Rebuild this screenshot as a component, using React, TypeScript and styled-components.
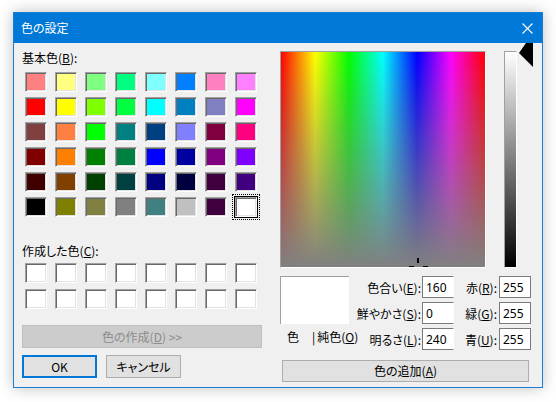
import React from "react";
import styled, { createGlobalStyle, css } from "styled-components";

const GlobalStyle = createGlobalStyle`
  html, body {
    margin: 0;
    padding: 0;
    background: #ffffff;
  }
  body {
    font-family: "Noto Sans CJK JP", "Noto Sans", sans-serif;
    font-size: 12px;
    font-feature-settings: "palt";
    color: #000;
  }
`;

const basicColors = [
  ["#ff8080", "#ffff80", "#80ff80", "#00ff80", "#80ffff", "#0080ff", "#ff80c0", "#ff80ff"],
  ["#ff0000", "#ffff00", "#80ff00", "#00ff40", "#00ffff", "#0080c0", "#8080c0", "#ff00ff"],
  ["#804040", "#ff8040", "#00ff00", "#008080", "#004080", "#8080ff", "#800040", "#ff0080"],
  ["#800000", "#ff8000", "#008000", "#008040", "#0000ff", "#0000a0", "#800080", "#8000ff"],
  ["#400000", "#804000", "#004000", "#004040", "#000080", "#000040", "#400040", "#400080"],
  ["#000000", "#808000", "#808040", "#808080", "#408080", "#c0c0c0", "#400040", "#ffffff"],
];

function App() {
  return (
    <>
      <GlobalStyle />
      <Page>
        <Window>
          <TitleBar>
            <span>色の設定</span>
            <CloseBox>
              <svg width="11" height="11" viewBox="0 0 11 11">
                <path d="M0.5 0.5 L10.5 10.5 M10.5 0.5 L0.5 10.5" stroke="#fff" strokeWidth="1.1" />
              </svg>
            </CloseBox>
          </TitleBar>
          <Body>
            <LeftColumn>
              <Label>
                基本色(<u>B</u>):
              </Label>
              <SwatchGrid>
                {basicColors.flat().map((c, i) => (
                  <Swatch key={i} $color={c} $selected={i === 47} />
                ))}
              </SwatchGrid>
              <Label $top={26}>
                作成した色(<u>C</u>):
              </Label>
              <SwatchGrid $rowGap={6} $top={4}>
                {Array.from({ length: 16 }).map((_, i) => (
                  <Swatch key={i} $color="#ffffff" />
                ))}
              </SwatchGrid>
              <WideButton disabled>
                色の作成(<u>D</u>) &gt;&gt;
              </WideButton>
              <ButtonRow>
                <PushButton $default>OK</PushButton>
                <PushButton>キャンセル</PushButton>
              </ButtonRow>
            </LeftColumn>
            <RightColumn>
              <PickerRow>
                <Spectrum>
                  <Crosshair width="23" height="14" viewBox="0 0 23 14">
                    <rect x="10" y="2" width="2" height="5" fill="#000" />
                    <rect x="2" y="10" width="5" height="2" fill="#000" />
                    <rect x="16" y="10" width="5" height="2" fill="#000" />
                  </Crosshair>
                </Spectrum>
                <LumBar />
                <LumArrow width="14" height="24" viewBox="0 0 14 24">
                  <polygon points="7,0 14,0 14,24 0,10" fill="#000" />
                </LumArrow>
              </PickerRow>
              <ValuesGrid>
                <Preview />
                <PreviewCaption>
                  <span>色</span>
                  <Bar>|</Bar>
                  <span>
                    純色(<u>O</u>)
                  </span>
                </PreviewCaption>
                <FieldLabel $row={1} $col={2}>
                  色合い(<u>E</u>):
                </FieldLabel>
                <Field $row={1} $col={3} $noRight readOnly value="160" />
                <FieldLabel $row={2} $col={2}>
                  鮮やかさ(<u>S</u>):
                </FieldLabel>
                <Field $row={2} $col={3} $noRight readOnly value="0" />
                <FieldLabel $row={3} $col={2}>
                  明るさ(<u>L</u>):
                </FieldLabel>
                <Field $row={3} $col={3} $noRight readOnly value="240" />
                <FieldLabel $row={1} $col={4}>
                  赤(<u>R</u>):
                </FieldLabel>
                <Field $row={1} $col={5} readOnly value="255" />
                <FieldLabel $row={2} $col={4}>
                  緑(<u>G</u>):
                </FieldLabel>
                <Field $row={2} $col={5} readOnly value="255" />
                <FieldLabel $row={3} $col={4}>
                  青(<u>U</u>):
                </FieldLabel>
                <Field $row={3} $col={5} readOnly value="255" />
                <AddButton>
                  色の追加(<u>A</u>)
                </AddButton>
              </ValuesGrid>
            </RightColumn>
          </Body>
        </Window>
      </Page>
    </>
  );
}

export default App;

const Page = styled.div`
  width: 556px;
  height: 402px;
  padding: 12px 0 0 13px;
  box-sizing: border-box;
`;

const Window = styled.div`
  width: 530px;
  height: 376px;
  box-sizing: border-box;
  border: 1px solid #1a7fd4;
  background: #f0f0f0;
  box-shadow: 0 0 14px rgba(0, 0, 0, 0.25);
  display: flex;
  flex-direction: column;
  overflow: hidden;
`;

const TitleBar = styled.div`
  height: 30px;
  flex: none;
  background: #0078d7;
  color: #fff;
  display: flex;
  align-items: center;
  justify-content: space-between;
  padding-left: 7px;
  line-height: 16px;
`;

const CloseBox = styled.div`
  width: 30px;
  height: 30px;
  display: flex;
  align-items: center;
  justify-content: center;
`;

const Body = styled.div`
  flex: 1;
  display: flex;
  gap: 18px;
  padding: 7px 9px 0 8px;
`;

const LeftColumn = styled.div`
  width: 240px;
  display: flex;
  flex-direction: column;
`;

const Label = styled.div<{ $top?: number }>`
  height: 16px;
  line-height: 16px;
  margin-top: ${(p) => p.$top ?? 0}px;
  white-space: nowrap;
  u {
    text-decoration-thickness: 1px;
  }
`;

const SwatchGrid = styled.div<{ $rowGap?: number; $top?: number }>`
  display: grid;
  grid-template-columns: repeat(8, 22px);
  column-gap: 8px;
  row-gap: ${(p) => p.$rowGap ?? 5}px;
  margin: ${(p) => p.$top ?? 6}px 0 0 3px;
`;

const Swatch = styled.div<{ $color: string; $selected?: boolean }>`
  position: relative;
  width: 22px;
  height: 20px;
  box-sizing: border-box;
  background: ${(p) => p.$color};
  border-top: 1px solid #a0a0a0;
  border-left: 1px solid #a0a0a0;
  border-bottom: 1px solid #ffffff;
  border-right: 1px solid #ffffff;
  box-shadow: inset 1px 1px 0 #696969, inset -1px -1px 0 #e3e3e3;
  ${(p) =>
    p.$selected &&
    css`
      outline: 1px solid #000;
      &::after {
        content: "";
        position: absolute;
        inset: -4px;
        border: 1px dotted #000;
      }
    `}
`;

const buttonBase = css`
  box-sizing: border-box;
  font-family: inherit;
  font-size: 12px;
  font-feature-settings: "palt";
  line-height: 16px;
  padding: 0;
  background: #e1e1e1;
  border: 1px solid #adadad;
  color: #000;
  u {
    text-decoration-thickness: 1px;
  }
`;

const WideButton = styled.button`
  ${buttonBase};
  margin-top: 16px;
  height: 23px;
  width: 240px;
  background: #cccccc;
  border-color: #bfbfbf;
  color: #8c8c8c;
`;

const ButtonRow = styled.div`
  display: flex;
  gap: 9px;
  margin-top: 7px;
`;

const PushButton = styled.button<{ $default?: boolean }>`
  ${buttonBase};
  width: 75px;
  height: 23px;
  ${(p) =>
    p.$default &&
    css`
      border: 2px solid #0078d7;
    `}
`;

const RightColumn = styled.div`
  width: 253px;
  display: flex;
  flex-direction: column;
  margin-top: 1px;
`;

const PickerRow = styled.div`
  display: flex;
  align-items: flex-start;
  height: 217px;
`;

const Spectrum = styled.div`
  position: relative;
  width: 206px;
  height: 217px;
  box-sizing: border-box;
  border-top: 1px solid #a0a0a0;
  border-left: 1px solid #a0a0a0;
  border-right: 1px solid #ffffff;
  border-bottom: 1px solid #ffffff;
  overflow: hidden;
  background: linear-gradient(to bottom, rgba(128, 128, 128, 0) 0%, #808080 100%),
    linear-gradient(
      to right,
      #ff0000 0%,
      #ffff00 16.67%,
      #00ff00 33.33%,
      #00ffff 50%,
      #0000ff 66.67%,
      #ff00ff 83.33%,
      #ff0000 100%
    );
`;

const Crosshair = styled.svg`
  position: absolute;
  left: 126px;
  top: 204px;
`;

const LumBar = styled.div`
  width: 13px;
  height: 217px;
  margin-left: 18px;
  box-sizing: border-box;
  border-top: 1px solid #a0a0a0;
  border-left: 1px solid #a0a0a0;
  border-right: 1px solid #ffffff;
  border-bottom: 1px solid #ffffff;
  background: linear-gradient(to bottom, #ffffff, #000000);
`;

const LumArrow = styled.svg`
  margin: -8px 0 0 2px;
  flex: none;
`;

const ValuesGrid = styled.div`
  display: grid;
  grid-template-columns: 69px 73px 32px 45px 32px;
  grid-template-rows: 22px 22px 22px;
  row-gap: 4px;
  margin-top: 8px;
`;

const Preview = styled.div`
  grid-row: 1 / 3;
  grid-column: 1;
  box-sizing: border-box;
  background: #ffffff;
  border-top: 1px solid #a0a0a0;
  border-left: 1px solid #a0a0a0;
`;

const PreviewCaption = styled.div`
  grid-row: 3;
  grid-column: 1 / 3;
  display: flex;
  align-items: flex-start;
  padding: 1px 0 0 7px;
  line-height: 16px;
  white-space: nowrap;
  u {
    text-decoration-thickness: 1px;
  }
`;

const Bar = styled.span`
  margin: 0 2px 0 13px;
`;

const FieldLabel = styled.div<{ $row: number; $col: number }>`
  grid-row: ${(p) => p.$row};
  grid-column: ${(p) => p.$col};
  display: flex;
  align-items: center;
  justify-content: flex-end;
  padding-right: ${(p) => (p.$col === 2 ? 1 : 2)}px;
  white-space: nowrap;
  u {
    text-decoration-thickness: 1px;
  }
`;

const Field = styled.input<{ $row: number; $col: number; $noRight?: boolean }>`
  grid-row: ${(p) => p.$row};
  grid-column: ${(p) => p.$col};
  width: 32px;
  height: 22px;
  box-sizing: border-box;
  margin: 0;
  padding: 0 0 0 3px;
  font-family: "Noto Sans", "Noto Sans CJK JP", sans-serif;
  font-size: 12px;
  color: #000;
  background: #fff;
  border: 1px solid #7a7a7a;
  border-right-color: ${(p) => (p.$noRight ? "#ffffff" : "#7a7a7a")};
  outline: none;
`;

const AddButton = styled.button`
  ${buttonBase};
  grid-column: 1 / -1;
  margin: 6px 2px 0 2px;
  height: 22px;
`;
